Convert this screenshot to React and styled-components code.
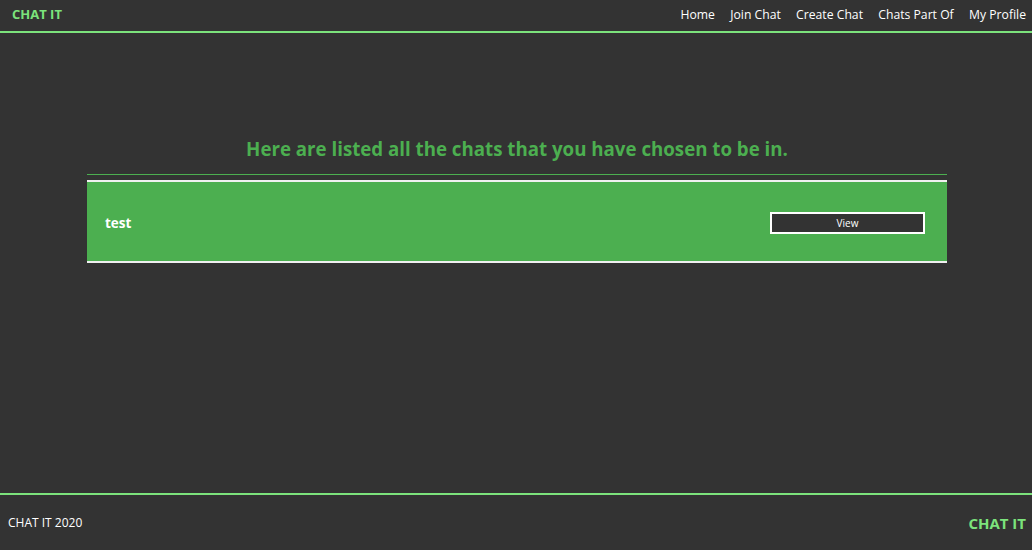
import React from "react";
import styled, { createGlobalStyle } from "styled-components";

const Global = createGlobalStyle`
  html, body { margin: 0; padding: 0; background: #333333; }
  body { font-family: "Open Sans", "Noto Sans", sans-serif; color: #ffffff; }
  * { box-sizing: border-box; }
`;

const Page = styled.div`
  min-height: 550px;
  display: flex;
  flex-direction: column;
`;

const Header = styled.header`
  height: 33px;
  display: flex;
  align-items: center;
  justify-content: space-between;
  padding: 0 6px 3px 12px;
  border-bottom: 2px solid #7ce37c;
`;

const Brand = styled.span`
  color: #7ce37c;
  font-weight: 700;
  font-size: ${(p) => p.size || 13}px;
`;

const Nav = styled.nav`
  display: flex;
  gap: 15.3px;
`;

const NavLink = styled.a`
  color: #ffffff;
  font-size: 12.2px;
  text-decoration: none;
`;

const Main = styled.main`
  flex: 1;
  padding: 102px 85px 0 87px;
`;

const Title = styled.h2`
  margin: 0;
  text-align: center;
  color: #4caf50;
  font-size: 18.7px;
  font-weight: 700;
  line-height: 28px;
  padding-bottom: 11px;
  border-bottom: 1px solid #4caf50;
`;

const ChatCard = styled.div`
  margin-top: 5px;
  height: 83px;
  background: #4caf50;
  border-top: 2px solid #f0f0f0;
  border-bottom: 2px solid #f0f0f0;
  display: flex;
  align-items: center;
  justify-content: space-between;
  padding: 2px 22px 0 18px;
`;

const ChatName = styled.span`
  font-weight: 700;
  font-size: 13.5px;
  color: #ffffff;
`;

const ViewButton = styled.button`
  width: 155px;
  height: 22px;
  background: #333333;
  border: 2px solid #ffffff;
  color: #ffffff;
  font-family: inherit;
  font-size: 10px;
  padding: 0;
`;

const Footer = styled.footer`
  height: 57px;
  border-top: 2px solid #7ce37c;
  display: flex;
  align-items: center;
  justify-content: space-between;
  padding: 0 6px 0 8px;
`;

const FooterText = styled.span`
  font-size: 12px;
  color: #ffffff;
`;

export default function App() {
  return (
    <Page>
      <Global />
      <Header>
        <Brand>CHAT IT</Brand>
        <Nav>
          <NavLink>Home</NavLink>
          <NavLink>Join Chat</NavLink>
          <NavLink>Create Chat</NavLink>
          <NavLink>Chats Part Of</NavLink>
          <NavLink>My Profile</NavLink>
        </Nav>
      </Header>
      <Main>
        <Title>Here are listed all the chats that you have chosen to be in.</Title>
        <ChatCard>
          <ChatName>test</ChatName>
          <ViewButton>View</ViewButton>
        </ChatCard>
      </Main>
      <Footer>
        <FooterText>CHAT IT 2020</FooterText>
        <Brand size={15}>CHAT IT</Brand>
      </Footer>
    </Page>
  );
}
